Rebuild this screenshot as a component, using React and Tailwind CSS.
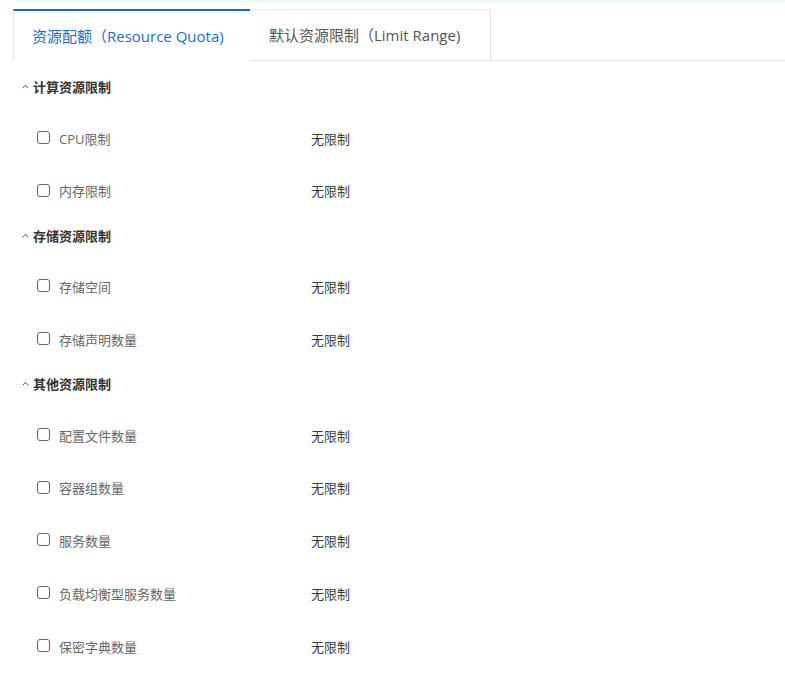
import React from "react";

const sections = [
  { title: "计算资源限制", rows: ["CPU限制", "内存限制"] },
  { title: "存储资源限制", rows: ["存储空间", "存储声明数量"] },
  {
    title: "其他资源限制",
    rows: ["配置文件数量", "容器组数量", "服务数量", "负载均衡型服务数量", "保密字典数量"],
  },
];

function Caret() {
  return (
    <svg width="7" height="5" viewBox="0 0 7 5" className="mt-[-3px]">
      <path d="M0.8 4.2 L3.5 1.2 L6.2 4.2" fill="none" stroke="#555" strokeWidth="1" />
    </svg>
  );
}

export default function App() {
  return (
    <div
      className="w-[785px] h-[697px] bg-white overflow-hidden"
      style={{ fontFamily: "'Open Sans', 'Noto Sans CJK SC', sans-serif" }}
    >
      <div className="ml-[15px] h-[3px] bg-[#eefbf0]" />
      <div className="mt-[6px] flex h-[52px] ml-[13px]">
        <div className="w-[237px] border-l border-l-[#e6e6e6] border-t-2 border-t-[#1668cc] flex items-center pl-[18px] text-[15px] text-[#1e6bcf]">
          资源配额（Resource Quota)
        </div>
        <div className="w-[241px] border-t border-r border-b border-[#e3e3e3] flex items-center pl-[19px] text-[15px] text-[#555]">
          默认资源限制（Limit Range)
        </div>
        <div className="flex-1 border-b border-[#e3e3e3]" />
      </div>
      <div className="mt-[15px] flex flex-col gap-[6px]">
        {sections.map((s) => (
          <div key={s.title}>
            <div className="h-6 flex items-center pl-[22px] gap-[4px]">
              <Caret />
              <span className="text-[13px] font-bold text-[#333]">{s.title}</span>
            </div>
            <div className="mt-[13px]">
              {s.rows.map((r) => (
                <div key={r} className="h-[52.75px] flex items-center">
                  <div className="ml-[37px] w-[13px] h-[13px] border border-[#666] rounded-[3px] mt-[-4px]" />
                  <div className="ml-[9px] w-[252px] text-[13px] text-[#666]">{r}</div>
                  <div className="text-[13px] text-[#3a3a3a]">无限制</div>
                </div>
              ))}
            </div>
          </div>
        ))}
      </div>
    </div>
  );
}
